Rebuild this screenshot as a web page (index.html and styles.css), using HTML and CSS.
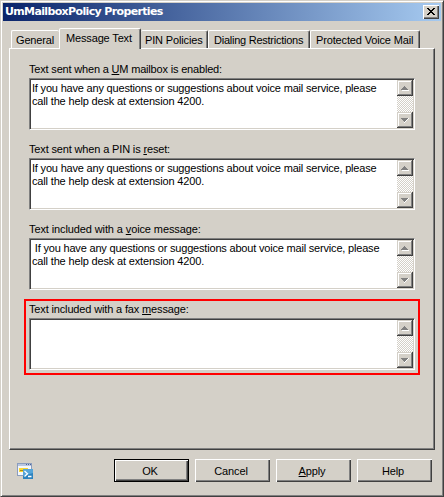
FILE: index.html
```html
<!DOCTYPE html>
<html lang="en">
<head>
<meta charset="utf-8">
<title>UmMailboxPolicy Properties</title>
<link rel="stylesheet" href="styles.css">
</head>
<body>
<svg class="symbols">
  <symbol id="up" viewBox="0 0 8 5"><path d="M0 4h8v1H1z" fill="#fff"/><path d="M3 0h1v1h1v1h1v1h1v1H0V3h1V2h1V1h1z" fill="#808080"/></symbol>
  <symbol id="down" viewBox="0 0 8 5"><path d="M7 0h1v1H7v1H6v1H5v1H4v1H3V3h1V2h1V1h2z" fill="#fff"/><path d="M0 0h7v1H6v1H5v1H4v1H3V3H2V2H1V1H0z" fill="#808080"/></symbol>
</svg>
<div class="window">
  <header class="titlebar">
    <span class="title">UmMailboxPolicy Properties</span>
    <button class="close" aria-label="Close"><svg width="8" height="7" viewBox="0 0 8 7" shape-rendering="crispEdges"><path d="M0 0h2v1h1v1h2V1h1V0h2v1H7v1H6v1H5v1h1v1h1v1h1v1H6V6H5V5H3v1H2v1H0V6h1V5h1V4h1V3H2V2H1V1H0z"/></svg></button>
  </header>
  <nav class="tabs">
    <div class="tab general"><span>General</span></div>
    <div class="tab selected"><span>Message Text</span></div>
    <div class="tab pin"><span>PIN Policies</span></div>
    <div class="tab dialing"><span>Dialing Restrictions</span></div>
    <div class="tab voice"><span>Protected Voice Mail</span></div>
  </nav>
  <main class="panel">
    <section class="field">
      <label class="enabled">Text sent when a <u>U</u>M mailbox is enabled:</label>
      <div class="box">
        <div class="text"><p>If you have any questions or suggestions about voice mail service, please</p><p class="second">call the help desk at extension 4200.</p></div>
        <div class="scroll"><i class="arrow"><svg><use href="#up"/></svg></i><i class="arrow"><svg><use href="#down"/></svg></i></div>
      </div>
    </section>
    <section class="field">
      <label>Text sent when a PIN is <u>r</u>eset:</label>
      <div class="box">
        <div class="text"><p>If you have any questions or suggestions about voice mail service, please</p><p class="second">call the help desk at extension 4200.</p></div>
        <div class="scroll"><i class="arrow"><svg><use href="#up"/></svg></i><i class="arrow"><svg><use href="#down"/></svg></i></div>
      </div>
    </section>
    <section class="field">
      <label class="voicemsg">Text included with a <u>v</u>oice message:</label>
      <div class="box">
        <div class="text"><p> If you have any questions or suggestions about voice mail service, please</p><p class="second">call the help desk at extension 4200.</p></div>
        <div class="scroll"><i class="arrow"><svg><use href="#up"/></svg></i><i class="arrow"><svg><use href="#down"/></svg></i></div>
      </div>
    </section>
    <section class="field highlighted">
      <label>Text included with a fax <u>m</u>essage:</label>
      <div class="box">
        <div class="text"></div>
        <div class="scroll"><i class="arrow"><svg><use href="#up"/></svg></i><i class="arrow"><svg><use href="#down"/></svg></i></div>
      </div>
    </section>
  </main>
  <footer class="actions">
    <svg class="shell" width="16" height="16" viewBox="0 0 16 16">
      <rect x=".5" y=".5" width="14" height="12" fill="#f4f7fc" stroke="#8b9dbd"/>
      <path d="M1 1h13v2H1z" fill="#b9c6e0"/>
      <path d="M9 1h1v1H9zM11 1h1v1h-1zM13 1h1v1h-1z" fill="#4c659c"/>
      <path d="M2 5h9v4H2z" fill="#fbd733"/><path d="M3 7h4v1H3z" fill="#a98b18"/>
      <rect x="6" y="6" width="10" height="10" fill="#2d83bf"/>
      <path d="M6 6h10v4L6 13z" fill="#55a5d9"/>
      <path d="M7.5 8l3 2.8-3 2.8M11 13.5h3.5" fill="none" stroke="#fff" stroke-width="1.3"/>
    </svg>
    <button class="btn default"><span>OK</span></button>
    <button class="btn"><span>Cancel</span></button>
    <button class="btn"><span><u>A</u>pply</span></button>
    <button class="btn"><span>Help</span></button>
  </footer>
</div>
</body>
</html>
```
FILE: styles.css
```css
* { box-sizing: border-box; }
body { margin: 0; background: #d4d0c8; font: 11px/13px "Liberation Sans", Arial, sans-serif; letter-spacing: -.15px; color: #000; overflow: hidden; }
p { margin: 0; }
u { text-underline-offset: 1px; text-decoration-thickness: 1px; text-decoration-skip-ink: none; }
.symbols { display: block; width: 0; height: 0; }
.window { width: 444px; height: 497px; padding: 1px; display: flex; flex-direction: column; background: #d4d0c8;
  border: 1px solid; border-color: #d4d0c8 #404040 #404040 #d4d0c8;
  box-shadow: inset 1px 1px #fff, inset -1px -1px #808080; }
.titlebar { height: 18px; margin: 1px 1px 0; padding: 0 2px 0 2px; flex: none; display: flex; align-items: center; justify-content: space-between;
  background: linear-gradient(90deg, #0a246a, #a6caf0); color: #fff; }
.title { font: bold 11px/18px "DejaVu Sans", Verdana, sans-serif; letter-spacing: -.64px; white-space: nowrap; }
.close { width: 16px; height: 14px; padding: 0 1px 1px 0; display: flex; align-items: center; justify-content: center; border: 0; background: #d4d0c8;
  box-shadow: inset 1px 1px #fff, inset -1px -1px #404040, inset -2px -2px #808080; }
.tabs { height: 20px; margin: 7px 0 0 9px; flex: none; display: flex; align-items: flex-end; }
.tab { height: 18px; padding: 3px 0 0 5px; white-space: nowrap; border: solid; border-width: 1px 1px 0; border-color: #fff #404040 transparent #fff;
  border-radius: 2px 2px 0 0; box-shadow: inset -1px 0 #808080; }
.general { width: 48px; padding-left: 4px; border-right: 0; box-shadow: none; }
.selected { height: 21px; width: 82px; margin-bottom: -1px; padding: 3px 0 0 6px; background: #d4d0c8; position: relative; z-index: 1; }
.pin { width: 67px; padding-left: 4px; border-left: 0; }
.dialing { width: 102px; letter-spacing: -.25px; }
.voice { width: 110px; }
.panel { width: 426px; height: 402px; margin-left: 7px; padding: 14px 0 0 19px; flex: none; border: 1px solid; border-color: #fff #404040 #404040 #fff; box-shadow: inset -1px -1px #808080; }
.field { width: 386px; height: 80px; }
.field label { display: block; height: 15px; line-height: 13px; white-space: nowrap; }
.field .enabled { letter-spacing: -.18px; }
.field .voicemsg { letter-spacing: -.11px; }
.box { width: 386px; height: 52px; display: flex; background: #fff; border: 1px solid; border-color: #808080 #fff #fff #808080;
  padding: 1px; box-shadow: inset 1px 1px #404040, inset -1px -1px #d4d0c8; }
.text { flex: 1; min-width: 0; padding: 2px 0 0 1px; white-space: pre; letter-spacing: -.19px; }
.second { letter-spacing: -.16px; }
.scroll { width: 16px; flex: none; display: flex; flex-direction: column; justify-content: space-between; background: repeating-conic-gradient(#fff 0 25%, #d4d0c8 0 50%) 0 0 / 2px 2px; }
.arrow { width: 16px; height: 16px; padding: 6px 0 0 4px; background: #d4d0c8;
  box-shadow: inset -1px -1px #404040, inset 1px 1px #d4d0c8, inset -2px -2px #808080, inset 2px 2px #fff; }
.arrow svg { display: block; width: 8px; height: 5px; shape-rendering: crispEdges; }
.highlighted { width: 396px; height: 76px; margin: -4px 0 0 -5px; padding: 2px 3px 0; border: 2px solid #f00; }
.actions { display: flex; gap: 6px; margin: 9px 0 0 15px; align-items: flex-start; }
.shell { margin: 4px 75px 0 0; }
.btn { width: 75px; height: 23px; padding: 1px 3px 0 0; border: 0; background: #d4d0c8; font: inherit; letter-spacing: inherit; color: #000;
  box-shadow: inset 1px 1px #fff, inset -1px -1px #404040, inset -2px -2px #808080; }
.default { border: 1px solid #000; }
```
